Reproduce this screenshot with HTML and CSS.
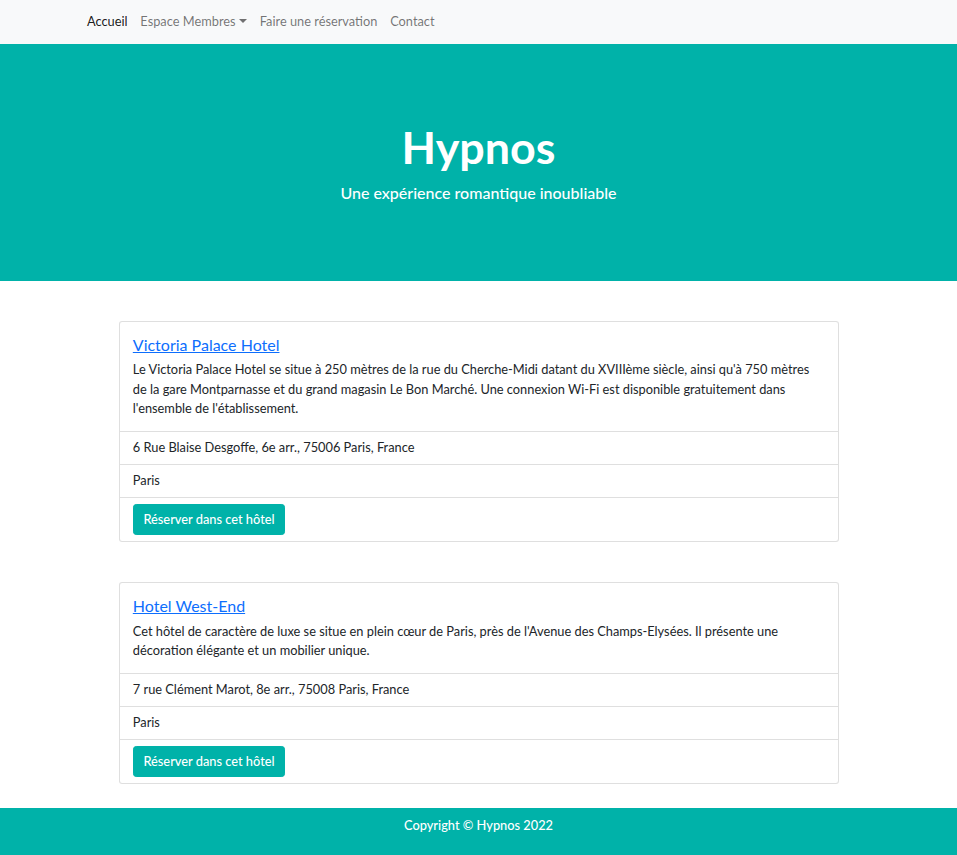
FILE: index.html
```html
<!DOCTYPE html>
<html lang="fr">
<head>
<meta charset="utf-8">
<title>Hypnos</title>
<link rel="stylesheet" href="styles.css">
</head>
<body>
<nav class="navbar">
  <ul class="nav">
    <li><a class="nav-link active" href="#">Accueil</a></li>
    <li><a class="nav-link" href="#">Espace Membres<span class="caret"></span></a></li>
    <li><a class="nav-link" href="#">Faire une réservation</a></li>
    <li><a class="nav-link" href="#">Contact</a></li>
  </ul>
</nav>
<header class="hero">
  <h1 class="hero-title">Hypnos</h1>
  <p class="hero-lead">Une expérience romantique inoubliable</p>
</header>
<main class="main">
  <div class="card">
    <div class="card-body">
      <h5 class="card-title"><a href="#">Victoria Palace Hotel</a></h5>
      <p class="card-text">Le Victoria Palace Hotel se situe à 250 mètres de la rue du Cherche-Midi datant du XVIIIème siècle, ainsi qu'à 750 mètres de la gare Montparnasse et du grand magasin Le Bon Marché. Une connexion Wi-Fi est disponible gratuitement dans l'ensemble de l'établissement.</p>
    </div>
    <ul class="list-group">
      <li class="list-item">6 Rue Blaise Desgoffe, 6e arr., 75006 Paris, France</li>
      <li class="list-item">Paris</li>
      <li class="list-item"><a class="btn" href="#">Réserver dans cet hôtel</a></li>
    </ul>
  </div>
  <div class="card">
    <div class="card-body">
      <h5 class="card-title"><a href="#">Hotel West-End</a></h5>
      <p class="card-text">Cet hôtel de caractère de luxe se situe en plein cœur de Paris, près de l'Avenue des Champs-Elysées. Il présente une décoration élégante et un mobilier unique.</p>
    </div>
    <ul class="list-group">
      <li class="list-item">7 rue Clément Marot, 8e arr., 75008 Paris, France</li>
      <li class="list-item">Paris</li>
      <li class="list-item"><a class="btn" href="#">Réserver dans cet hôtel</a></li>
    </ul>
  </div>
</main>
<footer class="footer">
  <p class="footer-text">Copyright © Hypnos 2022</p>
</footer>
</body>
</html>
```
FILE: styles.css
```css
* { box-sizing: border-box; }
html { font-size: 12.8px; }
body {
  margin: 0;
  font-family: Lato, "Open Sans", sans-serif;
  font-size: 12.8px;
  line-height: 1.5;
  color: #212529;
  background: #fff;
}
.navbar {
  height: 44px;
  background: #f8f9fa;
  display: flex;
  align-items: center;
  padding: 0 0 0 80.6px;
}
.nav {
  display: flex;
  list-style: none;
  margin: 0;
  padding: 0;
}
.nav-link {
  display: block;
  padding: 6px 6.4px 7px;
  color: rgba(0,0,0,.55);
  text-decoration: none;
}
.nav-link.active { color: rgba(0,0,0,.9); }
.caret {
  display: inline-block;
  margin-left: 3.4px;
  vertical-align: 2.5px;
  border-top: 4px solid;
  border-left: 4px solid transparent;
  border-right: 4px solid transparent;
}
.hero {
  background: #00b2a9;
  color: #fff;
  text-align: center;
  height: 237px;
  padding-top: 77px;
}
.hero-title {
  margin: 0 0 6.4px;
  font-size: 44.8px;
  line-height: 1.2;
  font-weight: 700;
}
.hero-lead {
  margin: 0;
  font-size: 16px;
  line-height: 1.5;
  font-weight: 500;
}
.main {
  padding: 40px 0 24px 1px;
  display: flex;
  flex-direction: column;
  gap: 40px;
}
.card {
  width: 720px;
  margin: 0 auto;
  border: 1px solid rgba(0,0,0,.125);
  border-radius: 3.2px;
  background: #fff;
}
.card-body { padding: 12.8px; }
.card-title {
  margin: 0 0 6.4px;
  font-size: 16px;
  line-height: 1.2;
  font-weight: 400;
}
.card-title a { color: #0d6efd; text-decoration: underline; }
.card-text { margin: 0; }
.list-group {
  list-style: none;
  margin: 0;
  padding: 0;
}
.list-item {
  border-top: 1px solid rgba(0,0,0,.125);
  padding: 6.4px 12.8px;
}
.btn {
  display: inline-block;
  background: #00b2a9;
  color: #fff;
  text-decoration: none;
  border: 1px solid #00b2a9;
  border-radius: 3.2px;
  padding: 4.8px 9.6px;
  line-height: 19.2px;
  font-weight: 500;
}
.footer {
  background: #00b2a9;
  color: #fff;
  height: 47px;
  text-align: center;
  padding-top: 8px;
}
.footer-text { margin: 0; font-weight: 500; }
```
